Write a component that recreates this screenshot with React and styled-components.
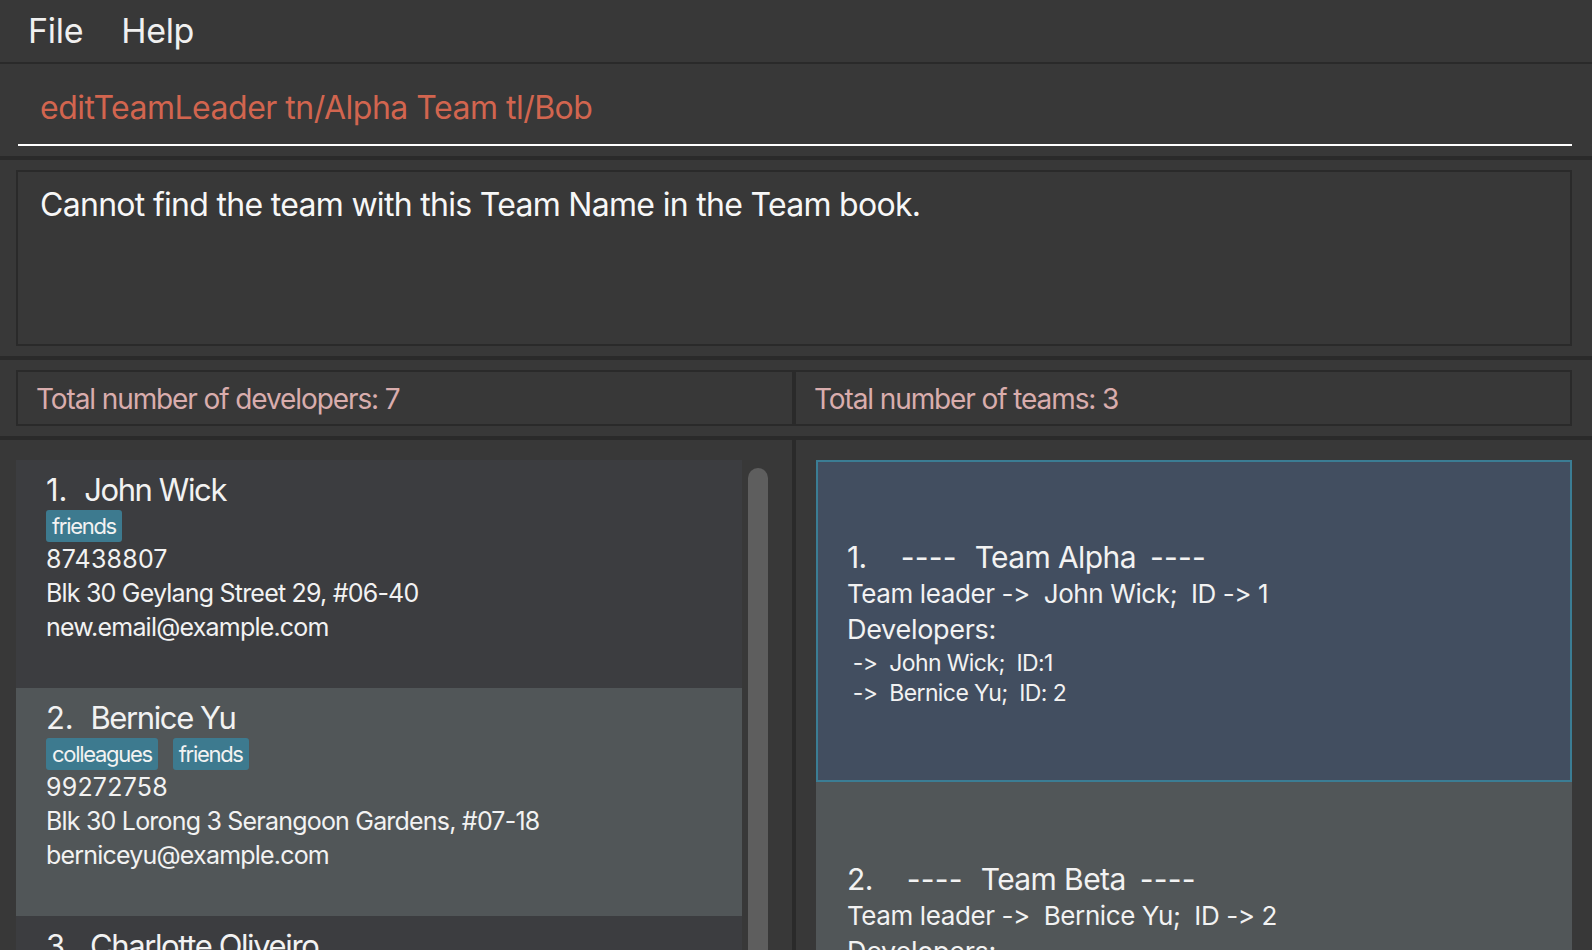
import React from "react";
import styled, { createGlobalStyle } from "styled-components";

const GlobalStyle = createGlobalStyle`
  html, body { margin: 0; padding: 0; background: #383838; overflow: hidden; }
  * { box-sizing: border-box; }
`;

const LINE = "#2a2a2a";
const FONT = `"Inter", "Roboto", sans-serif`;

const Root = styled.div`
  width: 1592px;
  height: 950px;
  display: flex;
  flex-direction: column;
  background: #383838;
  overflow: hidden;
  font-family: ${FONT};
  color: #f2f2f2;
`;

const MenuBar = styled.div`
  height: 64px;
  flex: none;
  display: flex;
  align-items: flex-start;
  gap: 38px;
  padding-left: 28px;
  border-bottom: 2px solid ${LINE};
`;

const MenuItem = styled.span`
  font-size: 34px;
  line-height: 62px;
  letter-spacing: -0.3px;
  color: #f0f0f0;
`;

const CommandSection = styled.div`
  height: 96px;
  flex: none;
  padding: 0 20px 10px 18px;
  border-bottom: 4px solid ${LINE};
`;

const CommandField = styled.div`
  height: 82px;
  padding: 8px 0 0 22px;
  border-bottom: 2px solid #ffffff;
  font-size: 32px;
  line-height: 72px;
  letter-spacing: -0.5px;
  color: #d2654f;
  white-space: pre;
`;

const ResultSection = styled.div`
  height: 200px;
  flex: none;
  padding: 10px 20px 10px 16px;
  border-bottom: 4px solid ${LINE};
`;

const ResultBox = styled.div`
  height: 176px;
  border: 2px solid ${LINE};
  padding: 13px 22px;
  font-size: 32px;
  line-height: 40px;
  letter-spacing: -0.7px;
  color: #f7f7f7;
`;

const StatsSection = styled.div`
  height: 80px;
  flex: none;
  display: flex;
  padding: 10px 20px 10px 16px;
  border-bottom: 4px solid ${LINE};
`;

const StatBox = styled.div`
  flex: 1;
  height: 56px;
  border: 2px solid ${LINE};
  padding: 1px 0 0 18px;
  font-size: 28px;
  line-height: 52px;
  letter-spacing: -1.1px;
  color: #d9adad;
`;

const Lists = styled.div`
  flex: 1;
  min-height: 0;
  display: flex;
`;

const LeftPanel = styled.div`
  width: 796px;
  flex: none;
  display: flex;
  gap: 6px;
  padding: 20px 24px 0 16px;
  border-right: 4px solid ${LINE};
  overflow: hidden;
`;

const CardList = styled.div`
  width: 726px;
  flex: none;
  display: flex;
  flex-direction: column;
`;

const PersonCard = styled.div`
  height: 228px;
  flex: none;
  padding: 10px 30px 0;
  background: ${(p) => (p.$alt ? "#515658" : "#3c3d40")};
  display: flex;
  flex-direction: column;
`;

const PersonName = styled.div`
  font-size: 31px;
  line-height: 40px;
  color: #f2f2f2;
  white-space: pre;
`;

const NameIndex = styled.span`
  letter-spacing: -0.2px;
`;

const NameText = styled.span`
  letter-spacing: -1.4px;
`;

const TagRow = styled.div`
  display: flex;
  gap: 15px;
  height: 32px;
`;

const Tag = styled.span`
  height: 32px;
  padding: 0 6px;
  border-radius: 3px;
  background: #3d7a8f;
  font-size: 22px;
  line-height: 32px;
  letter-spacing: -1.3px;
  color: #f2f2f2;
`;

const Detail = styled.div`
  font-size: 25px;
  line-height: 34px;
  letter-spacing: ${(p) => (p.$digits ? "0.2px" : "-0.8px")};
  color: #f2f2f2;
`;

const ScrollTrack = styled.div`
  width: 20px;
  flex: none;
  padding-top: 8px;
  display: flex;
  flex-direction: column;
`;

const ScrollThumb = styled.div`
  flex: 1;
  border-radius: 10px 10px 0 0;
  background: #5e5e5e;
`;

const RightPanel = styled.div`
  flex: 1;
  padding: 20px 20px 0 20px;
  display: flex;
  flex-direction: column;
  overflow: hidden;
`;

const TeamCard = styled.div`
  height: 322px;
  flex: none;
  padding: 76px 29px 0;
  border: 2px solid ${(p) => (p.$selected ? "#3b7d94" : "transparent")};
  background: ${(p) => (p.$selected ? "#424e60" : "#515658")};
  color: #f2f2f2;
`;

const TeamTitle = styled.div`
  display: flex;
  font-size: 30px;
  line-height: 38px;
  letter-spacing: -0.6px;
  white-space: pre;
`;

const TitleIndex = styled.span`
  margin-right: 34px;
`;

const Dashes = styled.span`
  letter-spacing: 0.2px;
`;

const TitleName = styled.span`
  margin: 0 14px 0 18px;
`;

const TeamLine = styled.div`
  font-size: 26px;
  line-height: 36px;
  letter-spacing: -0.4px;
  white-space: pre;
`;

const DevHeader = styled.div`
  font-size: 27px;
  line-height: 36px;
  letter-spacing: -0.3px;
`;

const DevLine = styled.div`
  font-size: 23px;
  line-height: 30px;
  letter-spacing: -0.6px;
  white-space: pre;
`;

const persons = [
  {
    index: "1.",
    name: "John Wick",
    tags: ["friends"],
    phone: "87438807",
    address: "Blk 30 Geylang Street 29, #06-40",
    email: "new.email@example.com",
  },
  {
    index: "2.",
    name: "Bernice Yu",
    tags: ["colleagues", "friends"],
    phone: "99272758",
    address: "Blk 30 Lorong 3 Serangoon Gardens, #07-18",
    email: "berniceyu@example.com",
  },
  {
    index: "3.",
    name: "Charlotte Oliveiro",
    tags: ["neighbours"],
    phone: "93210283",
    address: "Blk 11 Ang Mo Kio Street 74, #11-04",
    email: "charlotte@example.com",
  },
];

const teams = [
  {
    index: "1.",
    name: "Team Alpha",
    leader: "Team leader ->  John Wick;  ID -> 1",
    devs: [" ->  John Wick;  ID:1", " ->  Bernice Yu;  ID: 2"],
  },
  {
    index: "2.",
    name: "Team Beta",
    leader: "Team leader ->  Bernice Yu;  ID -> 2",
    devs: [" ->  Bernice Yu;  ID: 2"],
  },
];

export default function App() {
  return (
    <Root>
      <GlobalStyle />
      <MenuBar>
        <MenuItem>File</MenuItem>
        <MenuItem>Help</MenuItem>
      </MenuBar>
      <CommandSection>
        <CommandField>editTeamLeader tn/Alpha Team tl/Bob</CommandField>
      </CommandSection>
      <ResultSection>
        <ResultBox>Cannot find the team with this Team Name in the Team book.</ResultBox>
      </ResultSection>
      <StatsSection>
        <StatBox>Total number of developers: 7</StatBox>
        <StatBox>Total number of teams: 3</StatBox>
      </StatsSection>
      <Lists>
        <LeftPanel>
          <CardList>
            {persons.map((p, i) => (
              <PersonCard key={p.name} $alt={i % 2 === 1}>
                <PersonName>
                  <NameIndex>{p.index + "  "}</NameIndex>
                  <NameText>{p.name}</NameText>
                </PersonName>
                <TagRow>
                  {p.tags.map((t) => (
                    <Tag key={t}>{t}</Tag>
                  ))}
                </TagRow>
                <Detail $digits>{p.phone}</Detail>
                <Detail>{p.address}</Detail>
                <Detail>{p.email}</Detail>
              </PersonCard>
            ))}
          </CardList>
          <ScrollTrack>
            <ScrollThumb />
          </ScrollTrack>
        </LeftPanel>
        <RightPanel>
          {teams.map((t, i) => (
            <TeamCard key={t.name} $selected={i === 0}>
              <TeamTitle>
                <TitleIndex>{t.index}</TitleIndex>
                <Dashes>----</Dashes>
                <TitleName>{t.name}</TitleName>
                <Dashes>----</Dashes>
              </TeamTitle>
              <TeamLine>{t.leader}</TeamLine>
              <DevHeader>Developers:</DevHeader>
              {t.devs.map((d) => (
                <DevLine key={d}>{d}</DevLine>
              ))}
            </TeamCard>
          ))}
        </RightPanel>
      </Lists>
    </Root>
  );
}
